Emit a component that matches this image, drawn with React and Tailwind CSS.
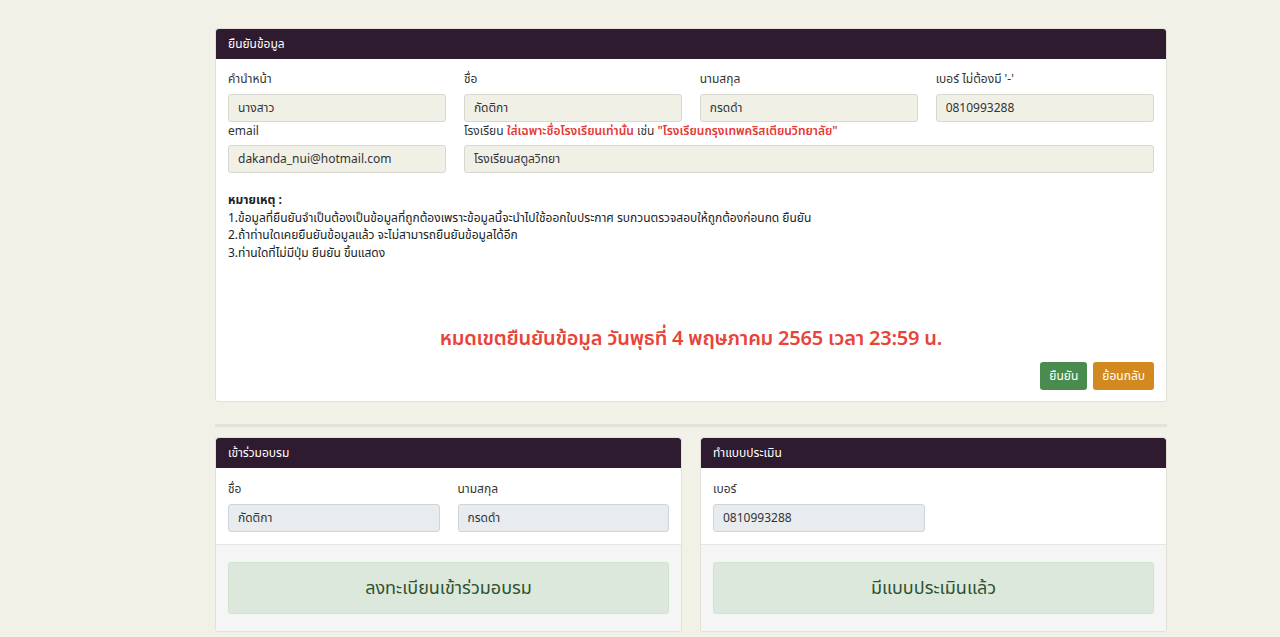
import React from "react";

const font = { fontFamily: '"Noto Sans Thai", "Noto Sans", "Liberation Sans", sans-serif' };

function Field({ label, value, tone = "cream", mb = "mb-[6px]", className = "" }) {
  const bg = tone === "cream" ? "bg-[#f1f0e7] border-[#d9d8cf]" : "bg-[#e9ecef] border-[#ced4da]";
  return (
    <div className={className}>
      <div className={`h-[18px] leading-[18px] text-[12px] text-[#333] ${mb}`}>{label}</div>
      <div className={`h-[28px] border rounded-[3px] px-[9px] flex items-center text-[12px] text-[#333] ${bg}`}>{value}</div>
    </div>
  );
}

function Header({ children }) {
  return (
    <div className="h-[30px] bg-[#2f1b2f] text-white text-[12px] px-3 flex items-center rounded-t-[3px]">{children}</div>
  );
}

export default function App() {
  return (
    <div className="min-h-[637px] bg-[#f2f1e8] pt-[28px]" style={font}>
      <div className="w-[952px] ml-[215px]">
        <div className="bg-white border border-[#e2e1d8] rounded-[3px]">
          <Header>ยืนยันข้อมูล</Header>
          <div className="px-3 pt-[11px] pb-[11px]">
            <div className="grid grid-cols-4 gap-x-[17.5px]">
              <Field label="คำนำหน้า" value="นางสาว" />
              <Field label="ชื่อ" value="กัดติกา" />
              <Field label="นามสกุล" value="กรดดำ" />
              <Field label="เบอร์ ไม่ต้องมี '-'" value="0810993288" />
              <Field label="email" value="dakanda_nui@hotmail.com" mb="mb-[5px]" />
              <div className="col-span-3">
                <div className="h-[18px] leading-[18px] text-[12px] text-[#333] mb-[5px]">
                  โรงเรียน <span className="text-[#e53935] font-semibold">ใส่เฉพาะชื่อโรงเรียนเท่านั้น</span> เช่น <span className="text-[#e53935] font-semibold">"โรงเรียนกรุงเทพคริสเตียนวิทยาลัย"</span>
                </div>
                <div className="h-[28px] border rounded-[3px] px-[9px] flex items-center text-[12px] text-[#333] bg-[#f1f0e7] border-[#d9d8cf]">โรงเรียนสตูลวิทยา</div>
              </div>
            </div>
            <div className="mt-[19px] text-[12px] leading-[17.5px] text-[#222]">
              <div className="font-bold">หมายเหตุ :</div>
              <div>1.ข้อมูลที่ยืนยันจำเป็นต้องเป็นข้อมูลที่ถูกต้องเพราะข้อมูลนี้จะนำไปใช้ออกใบประกาศ รบกวนตรวจสอบให้ถูกต้องก่อนกด ยืนยัน</div>
              <div>2.ถ้าท่านใดเคยยืนยันข้อมูลแล้ว จะไม่สามารถยืนยันข้อมูลได้อีก</div>
              <div>3.ท่านใดที่ไม่มีปุ่ม ยืนยัน ขึ้นแสดง</div>
            </div>
            <div className="mt-[63px] text-center text-[20px] font-semibold text-[#e8443a] leading-[28px] tracking-[-0.2px]">
              หมดเขตยืนยันข้อมูล วันพุธที่ 4 พฤษภาคม 2565 เวลา 23:59 น.
            </div>
            <div className="flex justify-end gap-[6px] mt-[9px]">
              <button className="h-[28px] px-[9px] rounded-[3px] bg-[#4a8c4f] text-white text-[12px]">ยืนยัน</button>
              <button className="h-[28px] px-[9px] rounded-[3px] bg-[#d2891f] text-white text-[12px]">ย้อนกลับ</button>
            </div>
          </div>
        </div>

        <div className="mt-[22px] h-[3px] bg-[#e3e2d9]"></div>

        <div className="mt-[10px] grid grid-cols-[467px_467px] gap-x-[18px]">
          <div className="bg-white border border-[#e2e1d8] rounded-[3px] overflow-hidden">
            <Header>เข้าร่วมอบรม</Header>
            <div className="px-3 pt-[12px] pb-[12px] grid grid-cols-2 gap-x-[18px]">
              <Field label="ชื่อ" value="กัดติกา" tone="gray" />
              <Field label="นามสกุล" value="กรดดำ" tone="gray" />
            </div>
            <div className="bg-[#f5f5f5] border-t border-[#e5e5e5] px-3 pt-[17px] pb-[17px]">
              <div className="h-[52px] rounded-[3px] bg-[#dce8dc] border border-[#d0e2d1] flex items-center justify-center text-[18px] text-[#2f5230]">ลงทะเบียนเข้าร่วมอบรม</div>
            </div>
          </div>
          <div className="bg-white border border-[#e2e1d8] rounded-[3px] overflow-hidden">
            <Header>ทำแบบประเมิน</Header>
            <div className="px-3 pt-[12px] pb-[12px] grid grid-cols-2 gap-x-[18px]">
              <Field label="เบอร์" value="0810993288" tone="gray" />
            </div>
            <div className="bg-[#f5f5f5] border-t border-[#e5e5e5] px-3 pt-[17px] pb-[17px]">
              <div className="h-[52px] rounded-[3px] bg-[#dce8dc] border border-[#d0e2d1] flex items-center justify-center text-[18px] text-[#2f5230]">มีแบบประเมินแล้ว</div>
            </div>
          </div>
        </div>
      </div>
    </div>
  );
}
